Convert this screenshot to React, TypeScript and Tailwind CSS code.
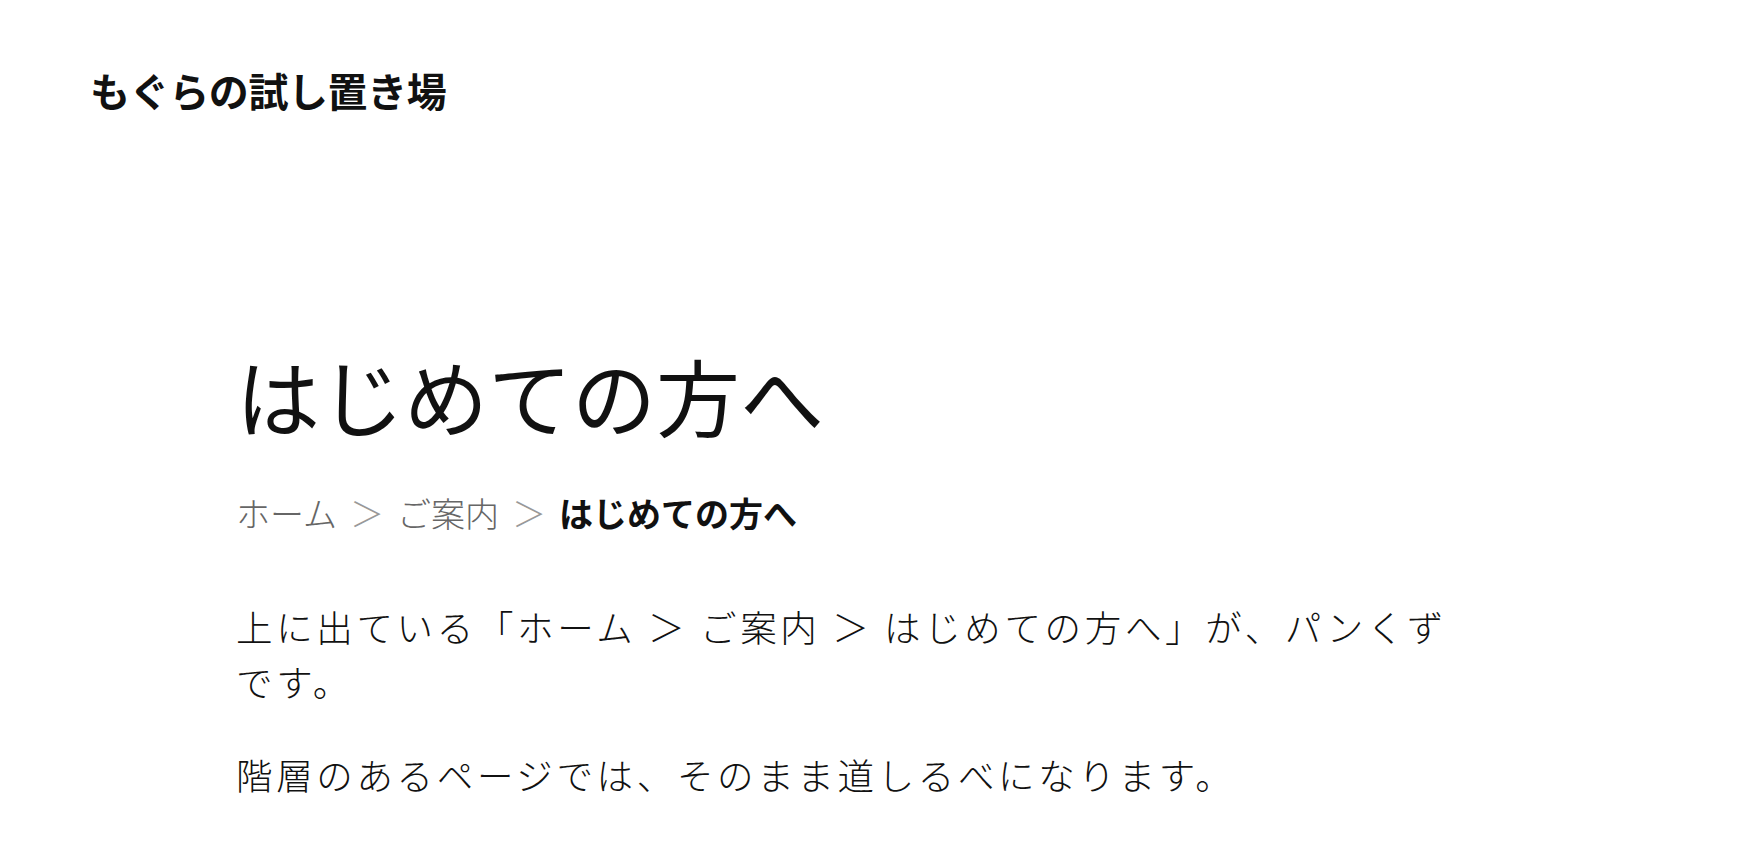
const jp = "font-['Noto_Sans_CJK_JP','Noto_Sans',sans-serif]"

export default function App() {
  return (
    <div className={`min-h-screen bg-white text-[#111] ${jp}`}>
      <header className="px-[90px] pt-[62px]">
        <p className="text-[40px] font-bold leading-[1.4] tracking-[-0.01em]">もぐらの試し置き場</p>
      </header>
      <main className="pl-[236px] pt-[222px] w-[1456px]">
        <h1 className="text-[84px] font-normal leading-[1.3]">はじめての方へ</h1>
        <nav className="mt-[37px] flex items-center gap-[13px] text-[34px] leading-[1.6]">
          <a className="text-[#666] font-light">ホーム</a>
          <span className="text-[#999] font-light">＞</span>
          <a className="text-[#666] font-light">ご案内</a>
          <span className="text-[#999] font-light">＞</span>
          <span className="font-bold">はじめての方へ</span>
        </nav>
        <div className="mt-[58px] text-[36.5px] font-light leading-[1.52] tracking-[0.1em] flex flex-col gap-[37px]">
          <p>上に出ている「ホーム ＞ ご案内 ＞ はじめての方へ」が、パンくずです。</p>
          <p>階層のあるページでは、そのまま道しるべになります。</p>
        </div>
      </main>
    </div>
  )
}
